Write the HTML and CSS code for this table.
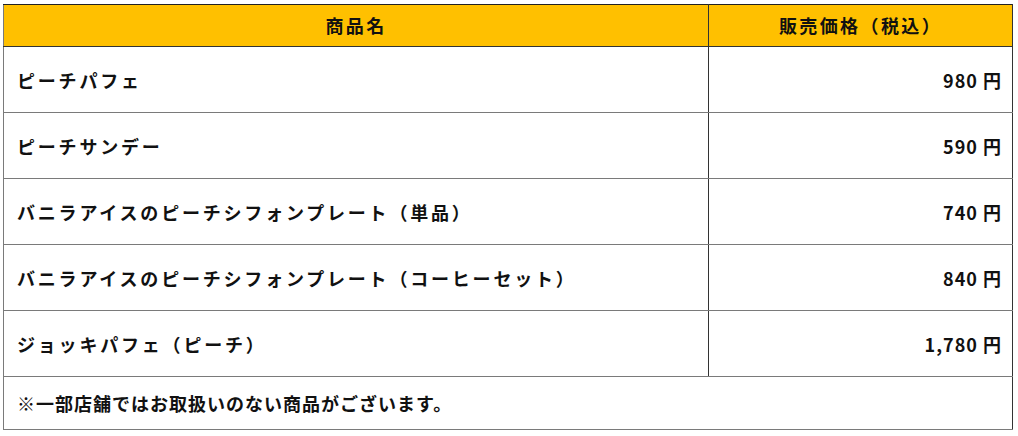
FILE: index.html
```html
<!DOCTYPE html>
<html lang="ja">
<head>
<meta charset="utf-8">
<link rel="stylesheet" href="styles.css">
</head>
<body>
<table class="menu">
  <thead>
    <tr><th class="name">商品名</th><th class="price">販売価格（税込）</th></tr>
  </thead>
  <tbody>
    <tr><td class="name">ピーチパフェ</td><td class="price">980 円</td></tr>
    <tr><td class="name">ピーチサンデー</td><td class="price">590 円</td></tr>
    <tr><td class="name">バニラアイスのピーチシフォンプレート（単品）</td><td class="price">740 円</td></tr>
    <tr><td class="name">バニラアイスのピーチシフォンプレート（コーヒーセット）</td><td class="price">840 円</td></tr>
    <tr><td class="name">ジョッキパフェ（ピーチ）</td><td class="price">1,780 円</td></tr>
    <tr class="note"><td colspan="2">※一部店舗ではお取扱いのない商品がございます。</td></tr>
  </tbody>
</table>
</body>
</html>
```
FILE: styles.css
```css
html, body { margin: 0; padding: 0; background: #fff; }
body { padding: 4px 0 0 3px; }
.menu {
  border-collapse: collapse;
  width: 1010px;
  font-family: "Noto Sans CJK JP", "Noto Sans", sans-serif;
  font-weight: 700;
  font-size: 18px;
  letter-spacing: 2.8px;
  color: #111;
  table-layout: fixed;
}
.menu th, .menu td {
  border: 1px solid #7a7a7a;
  padding: 0;
  line-height: 1.4;
}
.menu thead th {
  background: #ffc000;
  height: 41px;
  text-align: center;
  border-top: 1px solid #222;
  border-bottom: 1px solid #333;
  font-weight: 700;
  letter-spacing: 2.4px;
}
.menu th.name, .menu td.name { width: 704px; border-right: 1px solid #333; }
.menu th.price { border-right: 1px solid #333; }
.menu td.name { padding-left: 13px; }
.menu td.price { text-align: right; padding-right: 10px; border-right: 1px solid #333; letter-spacing: 1px; }
.menu tbody td { height: 63px; padding-top: 2px; }
.menu tbody tr.note td { height: 50px; padding-left: 13px; border-right: 1px solid #333; letter-spacing: 1px; }
```
